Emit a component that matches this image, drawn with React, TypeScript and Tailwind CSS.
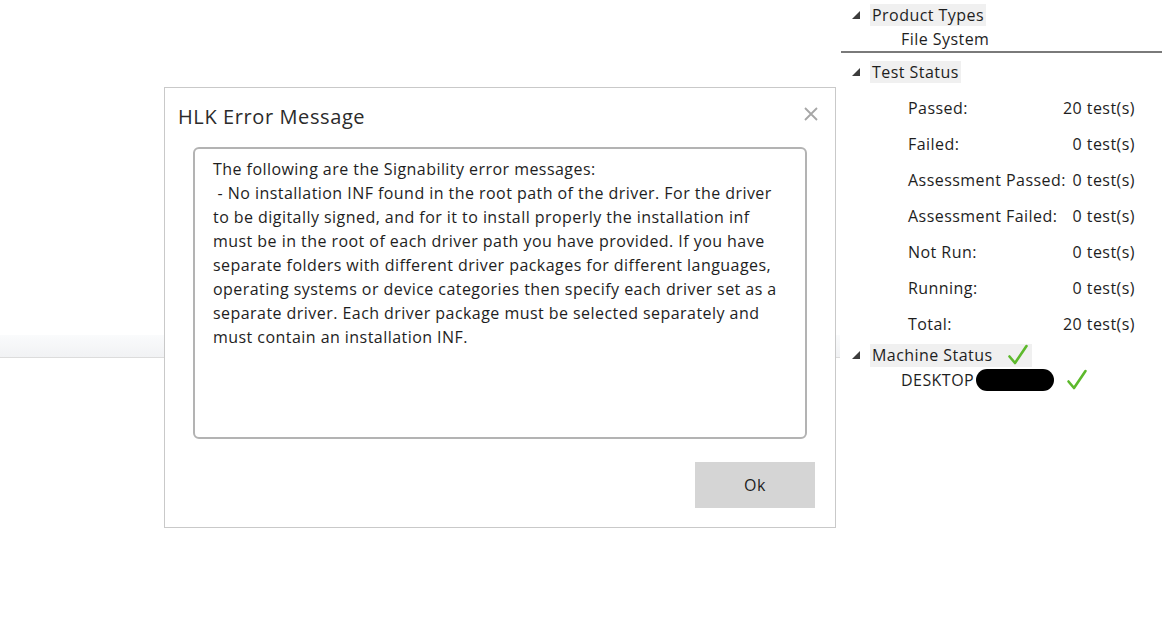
import React from 'react';

const font = { fontFamily: '"Open Sans", "Noto Sans", sans-serif' };

const Tri = () => (
  <svg width="10" height="10" viewBox="0 0 10 10" className="shrink-0">
    <polygon points="9,1 9,9 1,9" fill="#3c3c3c" />
  </svg>
);

const Check = ({ size = 22 }: { size?: number }) => (
  <svg width={size} height={size} viewBox="0 0 22 22">
    <path d="M2.5 12.5 L8 19 L19.5 2" fill="none" stroke="#5db92c" strokeWidth="2.6" strokeLinecap="round" strokeLinejoin="round" />
  </svg>
);

const stats: [string, string][] = [
  ['Passed:', '20 test(s)'],
  ['Failed:', '0 test(s)'],
  ['Assessment Passed:', '0 test(s)'],
  ['Assessment Failed:', '0 test(s)'],
  ['Not Run:', '0 test(s)'],
  ['Running:', '0 test(s)'],
  ['Total:', '20 test(s)'],
];

const lines = [
  'The following are the Signability error messages:',
  ' - No installation INF found in the root path of the driver. For the driver',
  'to be digitally signed, and for it to install properly the installation inf',
  'must be in the root of each driver path you have provided. If you have',
  'separate folders with different driver packages for different languages,',
  'operating systems or device categories then specify each driver set as a',
  'separate driver. Each driver package must be selected separately and',
  'must contain an installation INF.',
];

const App: React.FC = () => {
  return (
    <div className="relative w-[1162px] h-[628px] bg-white overflow-hidden flex text-[#1e1e1e] tracking-[0.45px]" style={font}>
      {/* main area behind the dialog */}
      <div className="w-[840px] shrink-0">
        <div className="mt-[335px] h-[23px] bg-gradient-to-b from-[#fafbfc] to-[#f1f2f4] border-b border-[#dcdcdc]" />
      </div>

      {/* summary tree */}
      <div className="w-[322px] shrink-0 text-[16px]">
        <div className="h-[30px] flex items-center pl-[11px]">
          <Tri />
          <span className="ml-[9px] px-[2px] h-[22px] flex items-center bg-[#f0f0f0]">Product Types</span>
        </div>
        <div className="h-[18px] flex items-center pl-[61px]">File System</div>
        <div className="mt-[3px] h-[2px] bg-[#7a7a7a] ml-[1px]" />
        <div className="h-[37px] flex items-center pl-[11px]">
          <Tri />
          <span className="ml-[9px] px-[2px] h-[22px] flex items-center bg-[#f0f0f0]">Test Status</span>
        </div>
        {stats.map(([label, value]) => (
          <div key={label} className="h-[36px] flex items-center pl-[68px] pr-[27px] justify-between">
            <span>{label}</span>
            <span>{value}</span>
          </div>
        ))}
        <div className="h-[26px] flex items-center pl-[11px]">
          <Tri />
          <span className="ml-[9px] pl-[2px] pr-[3px] h-[23px] flex items-center gap-[14px] bg-[#f0f0f0]">
            Machine Status
            <Check />
          </span>
        </div>
        <div className="h-[24px] flex items-center pl-[61px]">
          <span>DESKTOP</span>
          <span className="ml-[2px] w-[78px] h-[22px] bg-black rounded-full" />
          <span className="ml-[12px]"><Check /></span>
        </div>
      </div>

      {/* error dialog */}
      <div className="absolute left-[164px] top-[87px] w-[672px] h-[441px] bg-white border border-[#c9c9c9] flex flex-col">
        <div className="h-[58px] flex items-center justify-between pl-[13px] pr-[16px] shrink-0">
          <span className="text-[20px] tracking-[0.6px] text-[#2b2b2b]">HLK Error Message</span>
          <svg width="16" height="16" viewBox="0 0 16 16" className="-mt-[6px]">
            <path d="M2 2 L14 14 M14 2 L2 14" stroke="#a6a6a6" strokeWidth="1.8" />
          </svg>
        </div>
        <div className="ml-[28px] mt-[1px] w-[614px] h-[292px] shrink-0 border-2 border-[#b3b3b3] rounded-[6px] pt-[8px] pl-[18px] text-[16px] leading-[24px]">
          {lines.map((l, i) => (
            <div key={i} className="whitespace-pre">{l}</div>
          ))}
        </div>
        <div className="flex justify-end pr-[20px] mt-[23px]">
          <button className="w-[120px] h-[46px] bg-[#d5d5d5] text-[16px] text-[#1e1e1e]">Ok</button>
        </div>
      </div>
    </div>
  );
};

export default App;
